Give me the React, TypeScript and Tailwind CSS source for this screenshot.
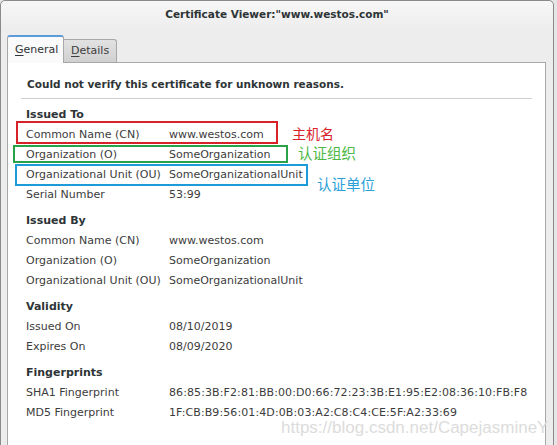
import React from 'react';

type Row = { label: string; value: string };

const sections: { title: string; rows: Row[] }[] = [
  {
    title: 'Issued To',
    rows: [
      { label: 'Common Name (CN)', value: 'www.westos.com' },
      { label: 'Organization (O)', value: 'SomeOrganization' },
      { label: 'Organizational Unit (OU)', value: 'SomeOrganizationalUnit' },
      { label: 'Serial Number', value: '53:99' },
    ],
  },
  {
    title: 'Issued By',
    rows: [
      { label: 'Common Name (CN)', value: 'www.westos.com' },
      { label: 'Organization (O)', value: 'SomeOrganization' },
      { label: 'Organizational Unit (OU)', value: 'SomeOrganizationalUnit' },
    ],
  },
  {
    title: 'Validity',
    rows: [
      { label: 'Issued On', value: '08/10/2019' },
      { label: 'Expires On', value: '08/09/2020' },
    ],
  },
  {
    title: 'Fingerprints',
    rows: [
      { label: 'SHA1 Fingerprint', value: '86:85:3B:F2:81:BB:00:D0:66:72:23:3B:E1:95:E2:08:36:10:FB:F8' },
      { label: 'MD5 Fingerprint', value: '1F:CB:B9:56:01:4D:0B:03:A2:C8:C4:CE:5F:A2:33:69' },
    ],
  },
];

const Section: React.FC<{ title: string; rows: Row[]; wide?: boolean }> = ({ title, rows, wide }) => (
  <div className="flex flex-col">
    <div className="h-[20px] leading-[20px] font-bold text-[#2e3436]">{title}</div>
    {rows.map((r, i) => (
      <div key={i} className="grid grid-cols-[143px_1fr] h-[20px] leading-[20px] text-[#3c3c3c]">
        <span>{r.label}</span>
        <span className={wide ? 'whitespace-nowrap tracking-[0.1px]' : 'whitespace-nowrap'}>{r.value}</span>
      </div>
    ))}
  </div>
);

export default function App() {
  return (
    <div className="relative w-[557px] h-[445px] overflow-hidden bg-[#e6e6e6] font-['DejaVu_Sans',sans-serif] text-[11px]">
      <div className="w-[554px] h-[460px] flex flex-col bg-[#ededed] border border-[#8a8a8a] rounded-t-[5px]">
        {/* title bar */}
        <div className="h-[28px] shrink-0 flex items-center justify-center bg-gradient-to-b from-[#f7f7f7] to-[#ededed] rounded-t-[5px]">
          <span className="font-bold text-[10.5px] text-[#2e3436]">Certificate Viewer:"www.westos.com"</span>
        </div>

        {/* tabs */}
        <div className="flex items-end pl-[6px] h-[32px] shrink-0 mt-[1px]">
          <div className="relative z-10 w-[57px] h-[28px] -mb-px bg-[#fafafa] border border-[#a8a8a8] border-b-0 border-t-[2px] border-t-[#5b9bd9] rounded-t-[3px] flex items-center pl-[7px] text-[#2e3436]">
            <span><span className="underline underline-offset-2">G</span>eneral</span>
          </div>
          <div className="w-[53px] h-[23px] bg-gradient-to-b from-[#e2e2e2] to-[#d0d0d0] border border-[#a8a8a8] border-l-0 border-b-0 rounded-tr-[3px] flex items-center pl-[7px] text-[#3c3c3c]">
            <span><span className="underline underline-offset-2">D</span>etails</span>
          </div>
        </div>

        {/* notebook page */}
        <div className="ml-[6px] w-[539px] flex-1 bg-white border border-[#a8a8a8] flex flex-col">
          <div className="pl-[19px] pt-[13px] h-[35px] leading-[16px] font-bold text-[10.5px] text-[#2e3436]">
            Could not verify this certificate for unknown reasons.
          </div>
          <div className="ml-[13px] w-[511px] h-px bg-[#cfcfcf]" />
          <div className="pl-[18px] pt-[6px] flex flex-col gap-[6px]">
            {sections.map((s, i) => (
              <Section key={i} title={s.title} rows={s.rows} wide={s.title === 'Fingerprints'} />
            ))}
          </div>
        </div>
      </div>

      {/* annotations */}
      <div className="absolute left-[16px] top-[121px] w-[262px] h-[23px] border-[2.5px] border-[#d8222a]" />
      <div className="absolute left-[13px] top-[145px] w-[275px] h-[18px] border-[2.5px] border-[#2aa348]" />
      <div className="absolute left-[15px] top-[164px] w-[293px] h-[22px] border-[2.5px] border-[#1b9bd7]" />
      <div className="absolute left-[292px] top-[123px] text-[14px] leading-[20px] text-[#d8222a] font-['Noto_Sans_CJK_SC',sans-serif]">主机名</div>
      <div className="absolute left-[298px] top-[143px] text-[14.5px] leading-[20px] text-[#4cb848] font-['Noto_Sans_CJK_SC',sans-serif]">认证组织</div>
      <div className="absolute left-[317px] top-[174px] text-[14.5px] leading-[20px] text-[#2a9fd8] font-['Noto_Sans_CJK_SC',sans-serif]">认证单位</div>

      <div className="absolute left-[281px] top-[418px] whitespace-nowrap text-[17px] leading-[20px] text-[#dcdcdc] font-['Liberation_Sans',sans-serif]">
        https://blog.csdn.net/CapejasmineY
      </div>
    </div>
  );
}
